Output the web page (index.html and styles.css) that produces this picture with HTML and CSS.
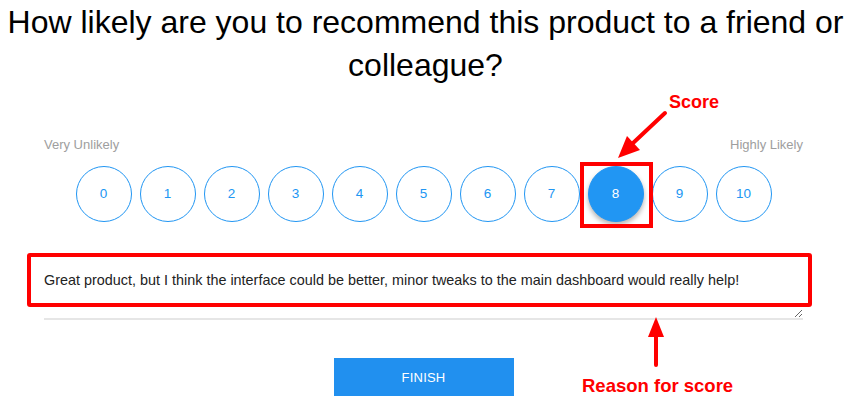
FILE: index.html
```html
<!DOCTYPE html>
<html lang="en">
<head>
<meta charset="utf-8">
<title>Survey</title>
<link rel="stylesheet" href="styles.css">
</head>
<body>
<div class="page">
  <h1 class="title">How likely are you to recommend this product to a friend or colleague?</h1>
  <div class="survey">
    <div class="scale-labels">
      <span>Very Unlikely</span>
      <span>Highly Likely</span>
    </div>
    <div class="scale">
      <button class="score">0</button>
      <button class="score">1</button>
      <button class="score">2</button>
      <button class="score">3</button>
      <button class="score">4</button>
      <button class="score">5</button>
      <button class="score">6</button>
      <button class="score">7</button>
      <button class="score selected">8</button>
      <button class="score">9</button>
      <button class="score">10</button>
    </div>
    <textarea class="reason">Great product, but I think the interface could be better, minor tweaks to the main dashboard would really help!</textarea>
    <button class="finish">FINISH</button>
  </div>

  <svg class="annotations" width="851" height="403" viewBox="0 0 851 403">
    <rect x="582" y="164" width="69" height="62" fill="none" stroke="#ff0000" stroke-width="4"/>
    <rect x="29" y="255" width="781" height="50" rx="1" fill="none" stroke="#ff0000" stroke-width="4"/>
    <line x1="665" y1="113" x2="632" y2="144" stroke="#ff0000" stroke-width="4" stroke-linecap="round"/>
    <polygon points="618,158 640,150 627,136" fill="#ff0000"/>
    <line x1="656" y1="335" x2="656" y2="365" stroke="#ff0000" stroke-width="4" stroke-linecap="round"/>
    <polygon points="656,317 664,337 648,337" fill="#ff0000"/>
  </svg>
  <span class="note note-score">Score</span>
  <span class="note note-reason">Reason for score</span>
</div>
</body>
</html>
```

FILE: styles.css
```css
* {
  box-sizing: border-box;
}

html, body {
  margin: 0;
  padding: 0;
  background: #ffffff;
}

body {
  font-family: "Liberation Sans", Arial, sans-serif;
}

.page {
  position: relative;
  width: 851px;
  height: 403px;
  overflow: hidden;
}

.title {
  margin: 0;
  padding: 1px 2px 0;
  font-size: 32px;
  font-weight: normal;
  line-height: 43px;
  text-align: center;
  color: #000000;
}

.survey {
  display: flex;
  flex-direction: column;
  width: 759px;
  margin: 50px 0 0 44px;
}

.scale-labels {
  display: flex;
  justify-content: space-between;
  font-size: 13px;
  line-height: 16px;
  color: #9e9e9e;
}

.scale {
  display: flex;
  justify-content: center;
  gap: 8px;
  margin-top: 13px;
}

.score {
  width: 56px;
  height: 56px;
  padding: 0;
  border: 1px solid #2196f3;
  border-radius: 50%;
  background: #ffffff;
  color: #2196f3;
  font-family: "Liberation Sans", Arial, sans-serif;
  font-size: 13.5px;
  line-height: 1;
}

.score.selected {
  background: #2196f3;
  color: #ffffff;
  box-shadow: 0 3px 5px rgba(0, 0, 0, 0.3);
}

.reason {
  display: block;
  width: 759px;
  height: 58px;
  margin-top: 40px;
  padding: 8px 0 0 0;
  border: none;
  border-bottom: 2px solid #e6e6e6;
  font-family: "Liberation Sans", Arial, sans-serif;
  font-size: 14.4px;
  line-height: 20px;
  color: #222222;
  resize: vertical;
  outline: none;
  background: transparent;
}

.finish {
  align-self: center;
  width: 180px;
  height: 38px;
  margin-top: 38px;
  border: none;
  border-radius: 0;
  background: #2190ef;
  color: #ffffff;
  font-family: "Liberation Sans", Arial, sans-serif;
  font-size: 13px;
  letter-spacing: 0.2px;
}

.annotations {
  position: absolute;
  top: 0;
  left: 0;
  pointer-events: none;
}

.note {
  position: absolute;
  font-family: "Liberation Sans", Arial, sans-serif;
  font-weight: bold;
  font-size: 18px;
  line-height: 18px;
  color: #ff0000;
  white-space: nowrap;
}

.note-score {
  top: 93px;
  left: 669px;
}

.note-reason {
  top: 377px;
  left: 582px;
  font-size: 18.5px;
}
```
